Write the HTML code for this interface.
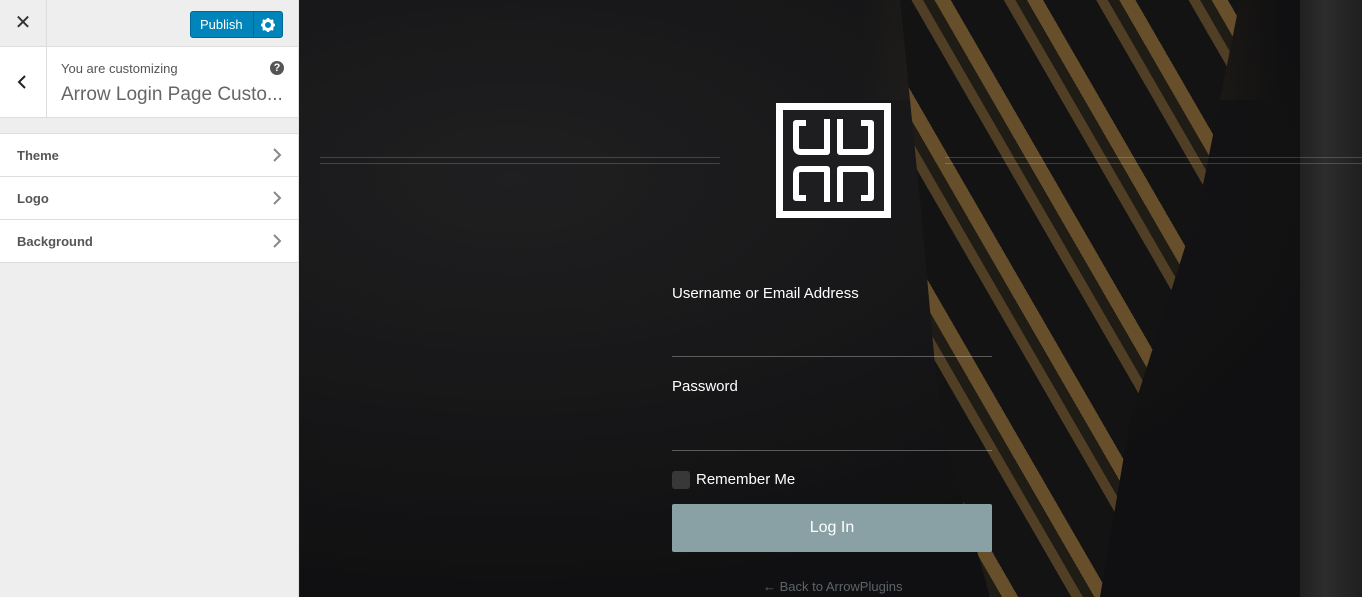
<!DOCTYPE html>
<html><head><meta charset="utf-8"><style>
*{margin:0;padding:0;box-sizing:border-box}
body{width:1362px;height:597px;overflow:hidden;font-family:"Liberation Sans",sans-serif;position:relative;background:#1c1c1e}
#side{position:absolute;left:0;top:0;width:299px;height:597px;background:#eeeeee;border-right:1px solid #ddd}
.top{height:47px;border-bottom:1px solid #ddd;position:relative}
.x{position:absolute;left:0;top:0;width:47px;height:47px;border-right:1px solid #ddd;font-size:20px;text-align:center;line-height:47px;color:#333}
.pub{position:absolute;left:190px;top:11px;width:93px;height:27px;background:#0085ba;border:1px solid #006799;border-radius:3px;color:#fff;font-size:13px}
.pub span{position:absolute;left:9px;top:5px}
.pub i{position:absolute;left:62px;top:0;width:1px;height:25px;background:#006799}
.head{height:71px;background:#fff;border-bottom:1px solid #ddd;position:relative}
.back{position:absolute;left:0;top:0;width:47px;height:70px;border-right:1px solid #ddd}
.item{height:43px;background:#fff;border-bottom:1px solid #ddd;position:relative;font-size:13px;color:#555;padding:14px 17px;font-weight:bold}
#bg{position:absolute;left:300px;top:0;width:1062px;height:597px;overflow:hidden;background:radial-gradient(ellipse at 20% 30%,#2a2a2c,#161618 70%)}
.tie{position:absolute;left:0;top:0;width:1062px;height:597px;clip-path:polygon(600px 0,940px 0,900px 200px,830px 420px,800px 597px,690px 597px,640px 420px,620px 200px);background:repeating-linear-gradient(60deg,#1a1a1a 0 28px,#6b5430 28px 38px,#2a241c 38px 48px,#8a6a3a 48px 62px,#1a1a1a 62px 80px)}
.coll{position:absolute;left:560px;top:0;width:420px;height:100px;background:linear-gradient(90deg,rgba(0,0,0,0),rgba(110,85,45,.5),rgba(0,0,0,0))}
.tape{position:absolute;left:1000px;top:0;width:62px;height:597px;background:linear-gradient(90deg,#2c2c2c,#3c3c3c 40%,#2a2a2a)}
.line{position:absolute;height:1px;background:rgba(255,255,255,.18)}
.lbl{position:absolute;left:372px;color:#fff;font-size:15px}
.fld{position:absolute;left:372px;width:320px;height:1px;background:rgba(255,255,255,.3)}
</style></head><body>
<div id="side">
 <div class="top"><div class="x">✕</div>
  <div class="pub"><span>Publish</span><i></i>
   <svg style="position:absolute;left:70px;top:6px" width="14" height="14" viewBox="0 0 14 14"><circle cx="7" cy="7" r="4.5" fill="none" stroke="#fff" stroke-width="3"/><g stroke="#fff" stroke-width="2.4"><path d="M7 0v3M7 11v3M0 7h3M11 7h3M2 2l2 2M10 10l2 2M12 2l-2 2M2 12l2-2"/></g></svg></div></div>
 <div class="head"><div class="back"><svg style="position:absolute;left:17px;top:28px" width="10" height="14"><path d="M8 1L2 7l6 6" fill="none" stroke="#222" stroke-width="2"/></svg></div>
  <div style="position:absolute;left:61px;top:14px;font-size:13px;color:#555">You are customizing</div>
  <div style="position:absolute;left:61px;top:37px;font-size:19px;color:#666">Arrow Login Page Custo...</div>
  <div style="position:absolute;left:270px;top:14px;width:14px;height:14px;border-radius:50%;background:#555;color:#fff;font-size:11px;font-weight:bold;text-align:center;line-height:14px">?</div>
 </div>
 <div style="height:15px"></div>
 <div style="border-top:1px solid #ddd">
 <div class="item">Theme</div><div class="item">Logo</div><div class="item">Background</div></div>
 <svg style="position:absolute;left:272px;top:148px" width="10" height="110"><g fill="none" stroke="#888" stroke-width="2"><path d="M2 1l6 6-6 6M2 44l6 6-6 6M2 87l6 6-6 6"/></g></svg>
</div>
<div id="bg">
 <div class="coll"></div><div class="tie"></div><div class="tape"></div>
 <div style="position:absolute;left:0;top:0;width:1062px;height:597px;background:rgba(0,0,0,.25)"></div>
 <div class="line" style="left:20px;top:157px;width:400px"></div><div class="line" style="left:20px;top:163px;width:400px"></div>
 <div class="line" style="left:645px;top:157px;width:417px"></div><div class="line" style="left:645px;top:163px;width:417px"></div>
 <svg style="position:absolute;left:476px;top:103px" width="115" height="115" viewBox="0 0 115 115">
  <rect width="115" height="115" fill="#fff"/><rect x="7" y="7" width="101" height="101" fill="#1e1e20"/>
  <g fill="none" stroke="#fff" stroke-width="6" stroke-linejoin="round">
   <path d="M30 20h-10v24q0 5 5 5h26v-33"/>
   <path d="M85 20h10v24q0 5-5 5h-26v-33"/>
   <path d="M30 95h-10v-24q0-5 5-5h26v33"/>
   <path d="M85 95h10v-24q0-5-5-5h-26v33"/>
  </g></svg>
 <div class="lbl" style="top:285px">Username or Email Address</div>
 <div class="fld" style="top:356px"></div>
 <div class="lbl" style="top:378px">Password</div>
 <div class="fld" style="top:450px"></div>
 <div style="position:absolute;left:372px;top:471px;width:18px;height:18px;border-radius:3px;background:rgba(80,80,80,.6)"></div>
 <div class="lbl" style="left:396px;top:471px">Remember Me</div>
 <div style="position:absolute;left:372px;top:504px;width:320px;height:48px;background:#89a0a4;border-radius:2px;color:#fff;font-size:16px;text-align:center;line-height:48px">Log In</div>
 <div style="position:absolute;left:463px;top:579px;color:#5e6367;font-size:13px">← Back to ArrowPlugins</div>
</div>
</body></html>
